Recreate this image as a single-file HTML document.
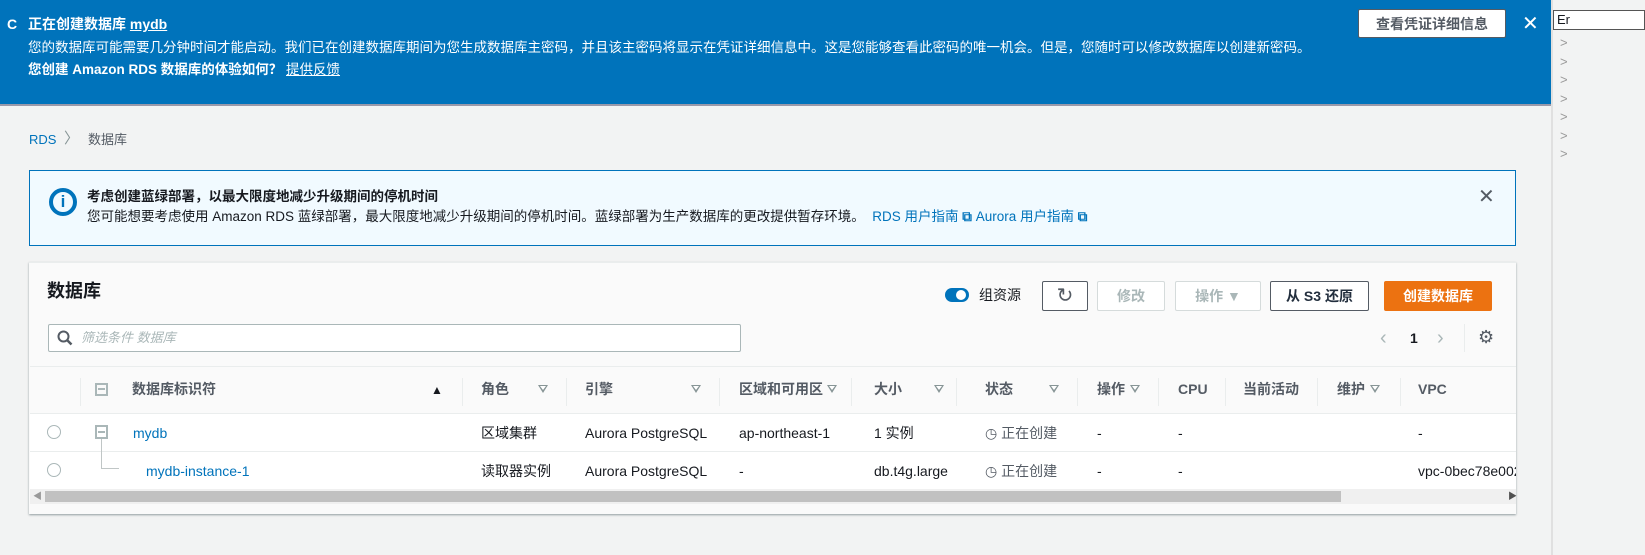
<!DOCTYPE html>
<html><head><meta charset="utf-8"><style>
*{box-sizing:border-box;margin:0;padding:0}
body{width:1645px;height:555px;overflow:hidden;background:#f2f3f3;font-family:"Liberation Sans","Noto Sans CJK SC",sans-serif;font-size:14px;color:#16191f;position:relative}
.a{position:absolute;white-space:nowrap;line-height:18px}
.btn{position:absolute;height:30px;border:1px solid #545b64;border-radius:2px;background:#fff;font-weight:bold;color:#545b64;text-align:center;line-height:28px;font-size:14px}
.dis{border-color:#d5dbdb;color:#aab7b8}
.th{position:absolute;top:380px;font-weight:bold;color:#545b64;line-height:18px}
.dv{position:absolute;top:378px;width:1px;height:28px;background:#eaeded}
.tri{position:absolute;top:385px;width:0;height:0;border-left:5px solid transparent;border-right:5px solid transparent;border-top:8px solid #879596}
.tri:after{content:"";position:absolute;left:-3px;top:-7px;border-left:3px solid transparent;border-right:3px solid transparent;border-top:4px solid #fff}
.lk{color:#0073bb}
.radio{position:absolute;width:14px;height:14px;border:1.5px solid #aab7b8;border-radius:50%;background:#fff}
</style></head><body>
<div class="a" style="left:1551px;top:0;width:94px;height:555px;background:#f2f3f3;border-left:2px solid #e0e0e0"></div>
<div class="a" style="left:1553px;top:10px;width:92px;height:20px;background:#fff;border:1px solid #555;font-size:13px;padding-left:3px;line-height:18px">Er</div>
<div class="a" style="left:1560px;top:34px;color:#999;font-size:13px;line-height:18.5px">&gt;<br>&gt;<br>&gt;<br>&gt;<br>&gt;<br>&gt;<br>&gt;</div>
<div class="a" style="left:0;top:0;width:1551px;height:106px;background:#0073bb;border-bottom:2px solid #99a"></div>
<div class="a" style="left:7px;top:15px;color:#fff;font-weight:bold;font-size:14px">C</div>
<div class="a" style="left:28px;top:15px;color:#fff;font-weight:bold">正在创建数据库 <u>mydb</u></div>
<div class="a" style="left:28px;top:39px;color:#fff;font-size:13.5px">您的数据库可能需要几分钟时间才能启动。我们已在创建数据库期间为您生成数据库主密码，并且该主密码将显示在凭证详细信息中。这是您能够查看此密码的唯一机会。但是，您随时可以修改数据库以创建新密码。</div>
<div class="a" style="left:28px;top:61px;color:#fff;font-weight:bold;font-size:13.5px">您创建 Amazon RDS 数据库的体验如何？ <u style="font-weight:normal">提供反馈</u></div>
<div class="btn" style="left:1358px;top:9px;width:148px;height:29px;border-color:#545b64">查看凭证详细信息</div>
<div class="a" style="left:1522px;top:13px;color:#fff;font-size:20px;line-height:22px">✕</div>
<div class="a lk" style="left:29px;top:131px;font-size:13px">RDS</div>
<div class="a" style="left:64px;top:130px;color:#879596;font-size:15px">〉</div>
<div class="a" style="left:88px;top:131px;color:#545b64;font-size:13px">数据库</div>
<div class="a" style="left:29px;top:170px;width:1487px;height:76px;background:#f1faff;border:1px solid #0073bb"></div>
<div class="a" style="left:49px;top:188px;width:28px;height:28px;border:4px solid #0073bb;border-radius:50%;color:#0073bb;font-weight:bold;text-align:center;line-height:20px;font-size:17px">i</div>
<div class="a" style="left:87px;top:188px;font-weight:bold;font-size:13.5px">考虑创建蓝绿部署，以最大限度地减少升级期间的停机时间</div>
<div class="a" style="left:87px;top:208px;font-size:13.5px">您可能想要考虑使用 Amazon RDS 蓝绿部署，最大限度地减少升级期间的停机时间。蓝绿部署为生产数据库的更改提供暂存环境。 <span class="lk">&nbsp;RDS 用户指南 <b>⧉</b> Aurora 用户指南 <b>⧉</b></span></div>
<div class="a" style="left:1478px;top:186px;color:#545b64;font-size:20px;line-height:22px">✕</div>
<div class="a" style="left:29px;top:262px;width:1487px;height:252px;background:#fafafa;box-shadow:0 1px 2px rgba(0,28,36,.4);border-top:1px solid #eaeded"></div>
<div class="a" style="left:47px;top:280px;font-size:18px;font-weight:bold;line-height:22px">数据库</div>
<div class="a" style="left:945px;top:288px;width:24px;height:14px;border-radius:7px;background:#0073bb"></div>
<div class="a" style="left:956px;top:290px;width:10px;height:10px;border-radius:50%;background:#fff"></div>
<div class="a" style="left:979px;top:286px">组资源</div>
<div class="btn" style="left:1042px;top:281px;width:46px;font-size:20px;font-weight:normal">↻</div>
<div class="btn dis" style="left:1097px;top:281px;width:68px">修改</div>
<div class="btn dis" style="left:1175px;top:281px;width:86px">操作 ▼</div>
<div class="btn" style="left:1270px;top:281px;width:99px;color:#232f3e">从 S3 还原</div>
<div class="btn" style="left:1384px;top:281px;width:108px;background:#ec7211;border-color:#ec7211;color:#fff">创建数据库</div>
<div class="a" style="left:48px;top:324px;width:693px;height:28px;background:#fff;border:1px solid #aab7b8;border-radius:2px"></div>
<svg class="a" style="left:57px;top:330px" width="16" height="16"><circle cx="6.5" cy="6.5" r="5" fill="none" stroke="#545b64" stroke-width="2"/><path d="M10 10l4.5 4.5" stroke="#545b64" stroke-width="2.5"/></svg>
<div class="a" style="left:81px;top:329px;color:#aab7b8;font-style:italic;font-size:13px">筛选条件 数据库</div>
<div class="a" style="left:1380px;top:327px;color:#aab7b8;font-size:20px;line-height:22px">‹</div>
<div class="a" style="left:1410px;top:329px;font-weight:bold">1</div>
<div class="a" style="left:1437px;top:327px;color:#aab7b8;font-size:20px;line-height:22px">›</div>
<div class="a" style="left:1464px;top:324px;width:1px;height:28px;background:#eaeded"></div>
<div class="a" style="left:1478px;top:327px;color:#545b64;font-size:18px;line-height:20px">⚙</div>
<div class="a" style="left:30px;top:366px;width:1486px;height:1px;background:#eaeded"></div>
<div class="a" style="left:30px;top:413px;width:1486px;height:76px;background:#fff"></div>
<div class="a" style="left:30px;top:413px;width:1486px;height:1px;background:#eaeded"></div>
<div class="a" style="left:30px;top:451px;width:1486px;height:1px;background:#eaeded"></div>
<div class="dv" style="left:80px"></div><div class="dv" style="left:462px"></div><div class="dv" style="left:566px"></div><div class="dv" style="left:719px"></div><div class="dv" style="left:851px"></div><div class="dv" style="left:956px"></div><div class="dv" style="left:1077px"></div><div class="dv" style="left:1158px"></div><div class="dv" style="left:1225px"></div><div class="dv" style="left:1317px"></div><div class="dv" style="left:1400px"></div>
<div class="a" style="left:95px;top:383px;width:13px;height:13px;border:2px solid #aab7b8"></div><div class="a" style="left:98px;top:388px;width:7px;height:2px;background:#aab7b8"></div>
<div class="th" style="left:132px">数据库标识符</div>
<div class="a" style="left:431px;top:381px;font-size:12px">▲</div>
<div class="th" style="left:481px">角色</div><div class="tri" style="left:538px"></div>
<div class="th" style="left:585px">引擎</div><div class="tri" style="left:691px"></div>
<div class="th" style="left:739px">区域和可用区</div><div class="tri" style="left:827px"></div>
<div class="th" style="left:874px">大小</div><div class="tri" style="left:934px"></div>
<div class="th" style="left:985px">状态</div><div class="tri" style="left:1049px"></div>
<div class="th" style="left:1097px">操作</div><div class="tri" style="left:1130px"></div>
<div class="th" style="left:1178px">CPU</div>
<div class="th" style="left:1243px">当前活动</div>
<div class="th" style="left:1337px">维护</div><div class="tri" style="left:1370px"></div>
<div class="th" style="left:1418px">VPC</div>
<div class="radio" style="left:47px;top:425px"></div>
<div class="radio" style="left:47px;top:463px"></div>
<div class="a" style="left:95px;top:425px;width:13px;height:14px;border:2px solid #aab7b8"></div><div class="a" style="left:98px;top:431px;width:7px;height:2px;background:#aab7b8"></div>
<div class="a" style="left:101px;top:439px;width:1px;height:30px;background:#c0c6c6"></div>
<div class="a" style="left:101px;top:468px;width:18px;height:1px;background:#c0c6c6"></div>
<div class="a lk" style="left:133px;top:424px">mydb</div>
<div class="a lk" style="left:146px;top:462px">mydb-instance-1</div>
<div class="a" style="left:481px;top:424px">区域集群</div><div class="a" style="left:481px;top:462px">读取器实例</div>
<div class="a" style="left:585px;top:424px">Aurora PostgreSQL</div><div class="a" style="left:585px;top:462px">Aurora PostgreSQL</div>
<div class="a" style="left:739px;top:424px">ap-northeast-1</div><div class="a" style="left:739px;top:462px">-</div>
<div class="a" style="left:874px;top:424px">1 实例</div><div class="a" style="left:874px;top:462px">db.t4g.large</div>
<div class="a" style="left:985px;top:424px;color:#545b64">◷ 正在创建</div><div class="a" style="left:985px;top:462px;color:#545b64">◷ 正在创建</div>
<div class="a" style="left:1097px;top:424px">-</div><div class="a" style="left:1097px;top:462px">-</div>
<div class="a" style="left:1178px;top:424px">-</div><div class="a" style="left:1178px;top:462px">-</div>
<div class="a" style="left:1418px;top:424px">-</div>
<div class="a" style="left:1418px;top:462px;width:98px;overflow:hidden">vpc-0bec78e002</div>
<div class="a" style="left:30px;top:489px;width:1486px;height:15px;background:#f0f0f0"></div>
<div class="a" style="left:45px;top:491px;width:1296px;height:11px;background:#c1c1c1"></div>
<div class="a" style="left:33px;top:489px;color:#999;font-size:9px;line-height:15px">◀</div>
<div class="a" style="left:1508px;top:489px;color:#505050;font-size:9px;line-height:15px">▶</div>
</body></html>
